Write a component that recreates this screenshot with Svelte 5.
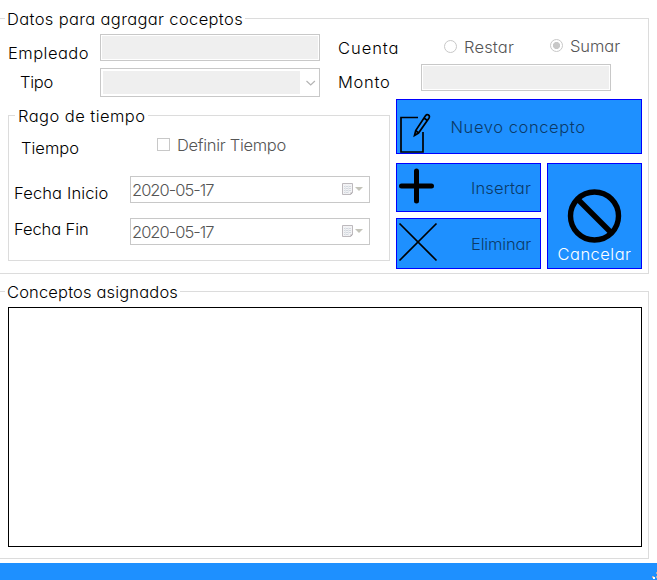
<script>
  const today = '2020-05-17';

  // Spreads the letters of a label so that it fills the given width.
  function fit(node, width) {
    const natural = node.getBoundingClientRect().width;
    node.style.letterSpacing = (width - natural) / node.textContent.length + 'px';
  }
</script>

{#snippet label(text, width, name)}
  <span class="text {name}" use:fit={width}>{text}</span>
{/snippet}

{#snippet datePicker()}
  <div class="date">
    {@render label(today, 81.5, 'muted')}
    <svg width="21" height="13" viewBox="0 0 21 13">
      <path d="M.5 .5h10v9l-2 2h-8z" fill="#f3f3f5" stroke="#bdb9bd" />
      <path d="M2 3.5h7M2 5.5h7M2 7.5h7M2 9.5h5" stroke="#d3d8de" />
      <path d="M3.5 2.5v8M6.5 2.5v8" stroke="#e5e8ec" />
      <path d="M11 9.500h-2.500v2.500z" fill="#aaa6aa" />
      <path d="M13 4h8l-4 4z" fill="#c3c3b9" />
    </svg>
  </div>
{/snippet}

<main>
  <section class="group first">
    <h2>{@render label('Datos para agragar coceptos', 236, '')}</h2>
    <div class="top">
      <div class="names">
        {@render label('Empleado', 81, 'empleado')}
        {@render label('Tipo', 33, 'tipo')}
      </div>
      <div class="inputs">
        <div class="input"></div>
        <div class="combo">
          <i></i>
          <svg width="19" height="23"><path d="M6.500 10l4.200 4 4.200-4" fill="none" stroke="#b4b4b4" stroke-width="1.200" /></svg>
        </div>
      </div>
      <div class="account">
        <div class="row cuenta">
          {@render label('Cuenta', 61.5, 'c')}
          <div class="choice restar"><span class="radio"></span>{@render label('Restar', 50, 'muted')}</div>
          <div class="choice sumar"><span class="radio on"></span>{@render label('Sumar', 50, 'muted')}</div>
        </div>
        <div class="row">
          {@render label('Monto', 52.5, 'monto')}
          <div class="input amount"></div>
        </div>
      </div>
    </div>

    <div class="bottom">
      <section class="group range">
        <h2>{@render label('Rago de tiempo', 127.5, '')}</h2>
        <div class="rangenames">
          {@render label('Tiempo', 58, 'tiempo')}
          {@render label('Fecha Inicio', 94.5, 'inicio')}
          {@render label('Fecha Fin', 74.5, 'fin')}
        </div>
        <div class="rangefields">
          <div class="choice define"><span class="check"></span>{@render label('Definir Tiempo', 109, 'muted')}</div>
          {@render datePicker()}
          {@render datePicker()}
        </div>
      </section>

      <div class="actions">
        <button class="new">
          <svg width="34" height="42" viewBox="0 0 34 42" fill="none" stroke="#000">
            <path d="M21 6.500H4v34.500h22V21" stroke-width="1.700" />
            <path d="M17.500 24.500l1.200-5L28.500 4.800q1.400-2 3-.8t.4 3.200L21.500 22zM18.700 19.500l2.800 2.500M27 7l3 2.200" stroke-width="1.700" />
          </svg>
          {@render label('Nuevo concepto', 135, '')}
        </button>
        <button class="insert">
          <svg width="38" height="38" viewBox="0 0 38 38"><path d="M4.500 19h30M19.500 4v30" stroke="#000" stroke-width="5" stroke-linecap="round" /></svg>
          {@render label('Insertar', 60, '')}
        </button>
        <button class="cancel">
          <svg width="56" height="56" viewBox="0 0 56 56" fill="none" stroke="#000" stroke-width="5.400">
            <circle cx="27.500" cy="28" r="24" /><path d="M10.500 11l34 34" />
          </svg>
          {@render label('Cancelar', 74, '')}
        </button>
        <button class="delete">
          <svg width="40" height="40" viewBox="0 0 40 40"><path d="M1.500 1.500l37 37M38.500 1.500l-37 37" stroke="#000" stroke-width="1.700" /></svg>
          {@render label('Eliminar', 60, '')}
        </button>
      </div>
    </div>
  </section>

  <section class="group second">
    <h2>{@render label('Conceptos asignados', 171, '')}</h2>
    <div class="list"></div>
  </section>

  <footer>
    <svg width="5" height="8" viewBox="0 0 5 8"><path d="M4 0h1v2H4zM0 4h2v2H0zM4 4h1v2H4z" fill="#b8b0a8" /><path d="M1 5h2v2H1z" fill="#fff" /></svg>
  </footer>
</main>

<style>
  :global(body) { background: #fff; }
  main {
    width: 657px;
    height: 580px;
    overflow: hidden;
    display: flex;
    flex-direction: column;
    padding-top: 18px;
    color: #000;
    font: 300 16.500px/20px "Century Gothic", Inter, "Liberation Sans", sans-serif;
    font-feature-settings: "cv11";
  }
  main *, main { box-sizing: border-box; }
  svg { display: block; flex: none; }
  .text { white-space: nowrap; flex: none; align-self: flex-start; }
  .muted { color: #555; }

  .group { position: relative; border: 1px solid #dcdcdc; }
  .first, .second { width: 649px; border-left: 0; }
  .first { height: 256px; }
  .second { height: 268px; margin-top: 17px; padding: 15px 6px 0 8px; }
  h2 {
    position: absolute;
    top: -10px;
    left: 5px;
    height: 20px;
    margin: 0;
    padding: 0 2px;
    background: #fff;
    font: inherit;
    display: flex;
  }

  .top { display: flex; height: 80px; }
  .names { width: 100px; padding: 24px 0 0 8px; display: flex; flex-direction: column; gap: 9px; }
  .tipo { margin-left: 12px; }
  .inputs { width: 220px; padding-top: 15px; display: flex; flex-direction: column; gap: 7px; }
  .input { height: 27px; border: 1px solid #c8c8c8; background: #efefef; box-shadow: inset 0 0 0 1px #fff; }
  .combo { height: 29px; border: 1px solid #c8c8c8; padding: 2px 0 2px 2px; display: flex; }
  .combo i { width: 197px; background: #efefef; }
  .account { padding: 17px 0 0 18px; }
  .row { display: flex; }
  .cuenta { height: 28px; }
  .c { margin-top: 2px; }
  .choice { display: flex; gap: 7px; }
  .restar { margin: 1px 0 0 44.500px; }
  .sumar { margin-left: 36px; }
  .radio, .check { width: 13px; height: 13px; border: 1px solid #c8c8c8; margin-top: 3px; flex: none; }
  .radio { border-radius: 50%; }
  .on { background: radial-gradient(circle, #c8c8c8 3.200px, #fff 3.900px); }
  .monto { margin-top: 8px; }
  .amount { width: 190px; margin-left: 30.500px; }

  .bottom { display: flex; gap: 6px; padding-left: 8px; }
  .range { width: 382px; height: 146px; margin-top: 16px; display: flex; }
  .range h2 { left: 6px; padding: 0 2px 0 3px; }
  .rangenames { width: 121px; padding: 22px 0 0 5px; display: flex; flex-direction: column; }
  .tiempo { margin: 0 0 25px 7px; }
  .inicio { margin-bottom: 16px; }
  .rangefields { width: 240px; padding-top: 19px; }
  .define { height: 41px; padding-left: 27px; }
  .date { height: 27px; border: 1px solid #c8c8c8; display: flex; justify-content: space-between; padding: 3px 6px 0 1px; margin-bottom: 15px; }
  .date svg { margin-top: 3px; }

  .actions {
    width: 246px;
    display: grid;
    grid-template-columns: 145px 95px;
    grid-template-rows: 55px 9px 49px 6px 51px;
    column-gap: 6px;
    align-content: start;
  }
  button {
    margin: 0;
    padding: 0;
    border: 1px solid #00f;
    border-radius: 0;
    background: #1e90ff;
    color: #0b3a68;
    font: inherit;
    font-feature-settings: inherit;
    display: flex;
    align-items: flex-start;
  }
  .new { grid-area: 1 / 1 / 2 / 3; padding-top: 17px; }
  .new svg { margin: -6px 19.500px 0 0; }
  .insert { grid-area: 3 / 1; padding-top: 14px; }
  .insert svg { margin: -11px 36px 0 0; }
  .delete { grid-area: 5 / 1; padding: 15px 0 0 1px; }
  .delete svg { margin: -12px 33px 0 0; }
  .cancel { grid-area: 3 / 2 / 6 / 3; flex-direction: column; align-items: center; padding-top: 24px; color: #fff; }
  .cancel .text { align-self: center; }

  .list { height: 240px; border: 1px solid #000; }
  footer { height: 17px; margin-top: 4px; background: #1e90ff; display: flex; justify-content: flex-end; padding-top: 9px; }
</style>
